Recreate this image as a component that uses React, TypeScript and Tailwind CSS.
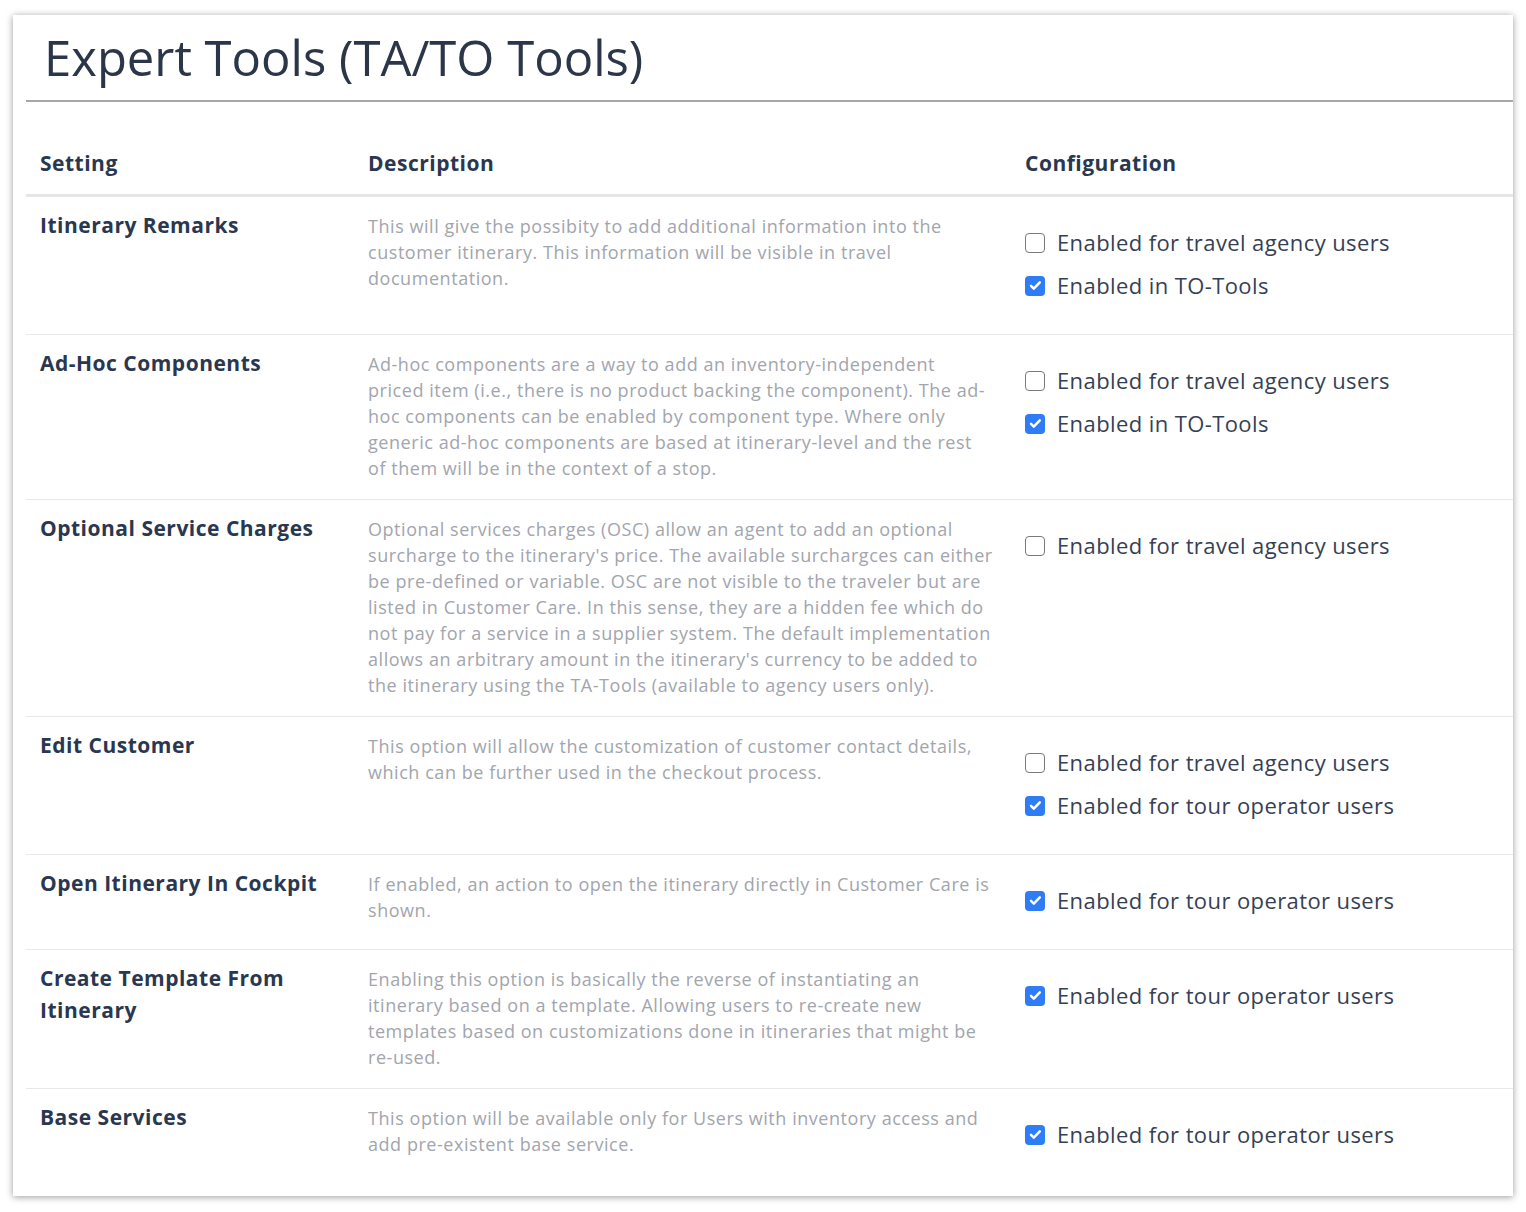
import React from 'react';

type Option = { label: string; checked: boolean };

interface SettingRow {
    name: string[];
    description: string[];
    options: Option[];
}

const TA_OFF: Option = { label: 'Enabled for travel agency users', checked: false };
const TO_TOOLS: Option = { label: 'Enabled in TO-Tools', checked: true };
const TO_ON: Option = { label: 'Enabled for tour operator users', checked: true };

const rows: SettingRow[] = [
    {
        name: ['Itinerary Remarks'],
        description: [
            'This will give the possibity to add additional information into the',
            'customer itinerary. This information will be visible in travel',
            'documentation.',
        ],
        options: [TA_OFF, TO_TOOLS],
    },
    {
        name: ['Ad-Hoc Components'],
        description: [
            'Ad-hoc components are a way to add an inventory-independent',
            'priced item (i.e., there is no product backing the component). The ad-',
            'hoc components can be enabled by component type. Where only',
            'generic ad-hoc components are based at itinerary-level and the rest',
            'of them will be in the context of a stop.',
        ],
        options: [TA_OFF, TO_TOOLS],
    },
    {
        name: ['Optional Service Charges'],
        description: [
            'Optional services charges (OSC) allow an agent to add an optional',
            "surcharge to the itinerary's price. The available surchargces can either",
            'be pre-defined or variable. OSC are not visible to the traveler but are',
            'listed in Customer Care. In this sense, they are a hidden fee which do',
            'not pay for a service in a supplier system. The default implementation',
            "allows an arbitrary amount in the itinerary's currency to be added to",
            'the itinerary using the TA-Tools (available to agency users only).',
        ],
        options: [TA_OFF],
    },
    {
        name: ['Edit Customer'],
        description: [
            'This option will allow the customization of customer contact details,',
            'which can be further used in the checkout process.',
        ],
        options: [TA_OFF, TO_ON],
    },
    {
        name: ['Open Itinerary In Cockpit'],
        description: [
            'If enabled, an action to open the itinerary directly in Customer Care is',
            'shown.',
        ],
        options: [TO_ON],
    },
    {
        name: ['Create Template From', 'Itinerary'],
        description: [
            'Enabling this option is basically the reverse of instantiating an',
            'itinerary based on a template. Allowing users to re-create new',
            'templates based on customizations done in itineraries that might be',
            're-used.',
        ],
        options: [TO_ON],
    },
    {
        name: ['Base Services'],
        description: [
            'This option will be available only for Users with inventory access and',
            'add pre-existent base service.',
        ],
        options: [TO_ON],
    },
];

const Checkbox = ({ checked }: { checked: boolean }) =>
    checked ? (
        <span className="flex h-[20px] w-[20px] shrink-0 items-center justify-center rounded-[4px] bg-[#2e7cf6]">
            <svg viewBox="0 0 16 16" className="h-[15px] w-[15px]" fill="none">
                <path d="M3.2 8.4l3 3 6.4-6.8" stroke="white" strokeWidth="2.6" strokeLinecap="round" strokeLinejoin="round" />
            </svg>
        </span>
    ) : (
        <span className="h-[20px] w-[20px] shrink-0 rounded-[4px] border-[1.5px] border-[#7a7a7a] bg-white" />
    );

export default function App() {
    return (
        <div className="min-h-screen bg-white pl-[13px] pt-[15px] font-['Open_Sans','Liberation_Sans',sans-serif]">
            <div className="w-[1500px] bg-white pb-[13px] pl-[13px] shadow-[0_1px_7px_rgba(0,0,0,0.4)]">
                <div className="flex h-[87px] items-center border-b-2 border-[#a4a8ac] pl-[18px]">
                    <h1 className="text-[49px] font-normal leading-none text-[#2b3649]">
                        Expert Tools (TA/TO Tools)
                    </h1>
                </div>

                <div className="grid grid-cols-[328px_657px_1fr] border-b-[3px] border-[#e6e6e6] pt-[45px] pb-[15px] text-[21px] font-bold leading-[32px] tracking-[0.5px] text-[#2a3750]">
                    <div className="px-[14px]">Setting</div>
                    <div className="px-[14px]">Description</div>
                    <div className="px-[14px]">Configuration</div>
                </div>

                {rows.map((row, i) => (
                    <div
                        key={row.name.join(' ')}
                        className={`grid grid-cols-[328px_657px_1fr] ${i < rows.length - 1 ? 'border-b border-[#e8e8e8]' : ''}`}
                    >
                        <div className="px-[14px] pt-[12px] text-[21px] font-bold leading-[32px] tracking-[0.5px] text-[#2a3750]">
                            {row.name.map((line) => (
                                <div key={line}>{line}</div>
                            ))}
                        </div>
                        <div className="px-[14px] pt-[16px] pb-[18px] text-[18px] leading-[26px] tracking-[0.55px] text-[#a2a5ad]">
                            {row.description.map((line) => (
                                <div key={line} className="whitespace-nowrap">
                                    {line}
                                </div>
                            ))}
                        </div>
                        <div className="px-[14px] pt-[24px] pb-[27px]">
                            {row.options.map((opt) => (
                                <label
                                    key={opt.label}
                                    className="flex h-[43px] items-center gap-[12px] text-[22px] tracking-[0.4px] text-[#363f55]"
                                >
                                    <Checkbox checked={opt.checked} />
                                    <span>{opt.label}</span>
                                </label>
                            ))}
                        </div>
                    </div>
                ))}
            </div>
        </div>
    );
}
